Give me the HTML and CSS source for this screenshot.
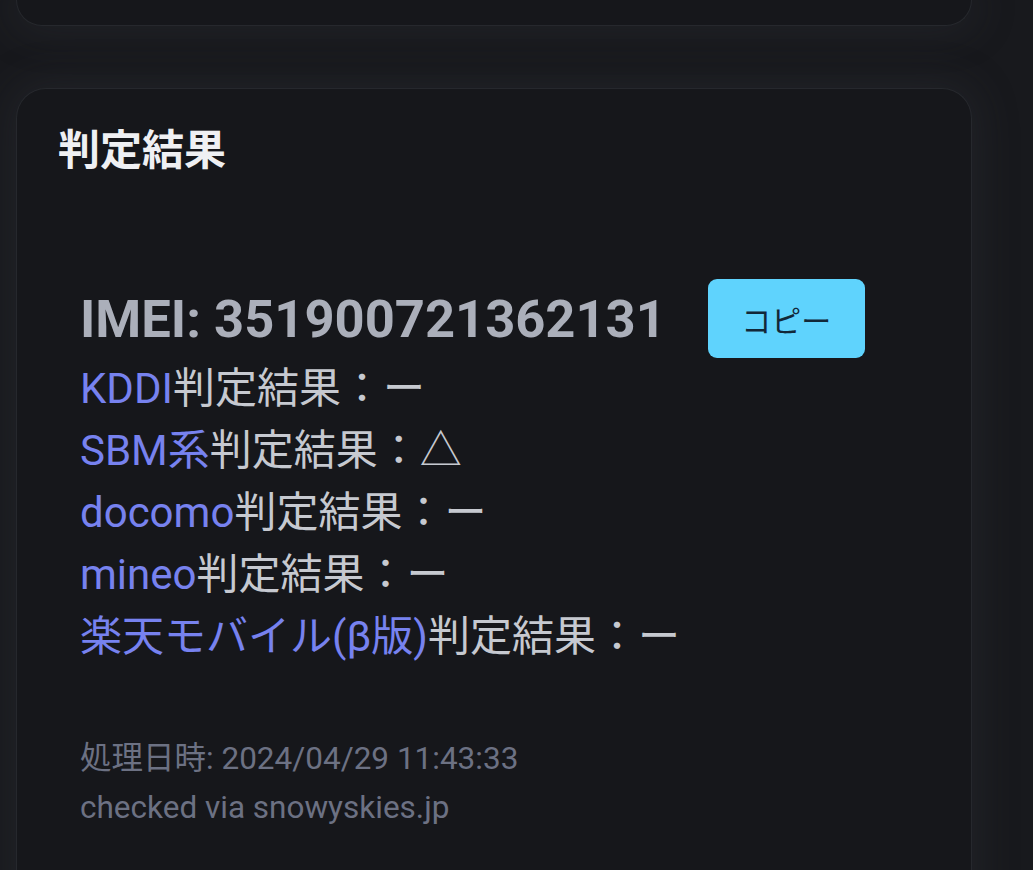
FILE: index.html
```html
<!DOCTYPE html>
<html lang="ja">
<head>
<meta charset="utf-8">
<title>判定結果</title>
<link rel="stylesheet" href="styles.css">
</head>
<body>
<div class="page">
  <div class="card card-top"></div>
  <section class="card card-result">
    <h2 class="title">判定結果</h2>
    <div class="result">
      <div class="imei-row">
        <span class="imei">IMEI: 351900721362131</span>
        <button class="copy">コピー</button>
      </div>
      <ul class="lines">
        <li><span class="carrier">KDDI</span>判定結果：ー</li>
        <li><span class="carrier">SBM系</span>判定結果：△</li>
        <li><span class="carrier">docomo</span>判定結果：ー</li>
        <li><span class="carrier">mineo</span>判定結果：ー</li>
        <li><span class="carrier">楽天モバイル(β版)</span>判定結果：ー</li>
      </ul>
      <div class="meta">
        <p>処理日時: 2024/04/29 11:43:33</p>
        <p>checked via snowyskies.jp</p>
      </div>
    </div>
  </section>
</div>
</body>
</html>
```
FILE: styles.css
```css
* { box-sizing: border-box; }
html, body {
  margin: 0;
  padding: 0;
  height: 100%;
  overflow: hidden;
}
body {
  background: #18191d;
  font-family: Roboto, "Noto Sans CJK JP", sans-serif;
  color: #c6c9d0;
}
.page {
  display: flex;
  flex-direction: column;
  gap: 62px;
  padding-left: 16px;
  width: 972px;
}
.card {
  background: #16171b;
  border: 1.5px solid #26282d;
  box-shadow: 0 0 40px 6px rgba(58, 60, 68, 0.28);
}
.card-top {
  height: 26px;
  border-top: none;
  border-radius: 0 0 30px 30px;
}
.card-result {
  border-radius: 30px 30px 0 0;
  border-bottom: none;
  height: 900px;
  padding: 28px 40px 0 41px;
}
.title {
  margin: 0;
  font-family: "Noto Sans CJK JP", sans-serif;
  font-weight: 700;
  font-size: 42px;
  line-height: 60px;
  color: #eff0f3;
}
.result {
  padding: 102px 0 0 22px;
}
.imei-row {
  display: flex;
  align-items: center;
  gap: 42px;
}
.imei {
  font-family: Roboto, sans-serif;
  font-weight: 700;
  font-size: 52.5px;
  line-height: 62px;
  color: #abafba;
}
.copy {
  width: 157px;
  height: 79px;
  border: none;
  border-radius: 9px;
  background: #5fd3fd;
  color: #122838;
  font-family: "Noto Sans CJK JP", sans-serif;
  font-size: 30px;
  padding: 0;
}
.lines {
  list-style: none;
  margin: 0;
  padding: 0;
}
.lines li {
  font-size: 42px;
  line-height: 62px;
  color: #c6c9d0;
  white-space: nowrap;
}
.carrier {
  color: #7782ef;
}
.meta {
  margin-top: 66px;
}
.meta p {
  margin: 0;
  font-size: 31.5px;
  line-height: 49px;
  color: #6c7183;
}
```
